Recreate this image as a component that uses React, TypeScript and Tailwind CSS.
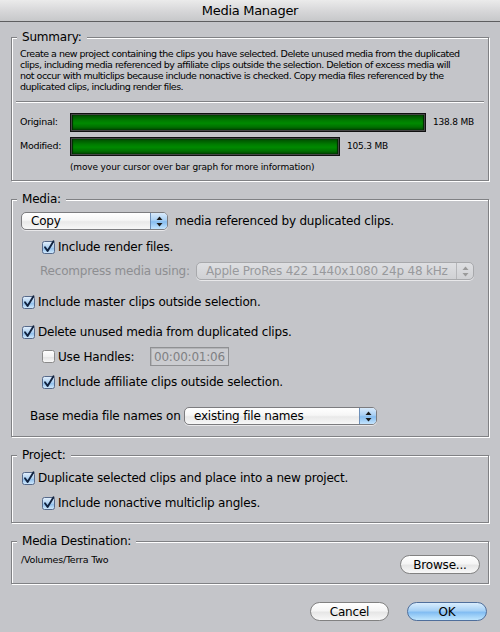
import { useId } from "react";

const bg = "bg-[#c4c5c9]";
const txt = "whitespace-nowrap text-[12px] leading-[16px] tracking-[-0.2px]";

function Check({ checked = true }: { checked?: boolean }) {
  const id = useId();
  return (
    <svg width="13" height="13" viewBox="0 0 13 13" className="shrink-0 overflow-visible">
      <defs>
        <linearGradient id={id} x1="0" y1="0" x2="0" y2="1">
          {checked ? (
            <>
              <stop offset="0" stopColor="#e6f1fc" />
              <stop offset="0.5" stopColor="#abcff1" />
              <stop offset="0.55" stopColor="#8fbfec" />
              <stop offset="1" stopColor="#d4ebfd" />
            </>
          ) : (
            <>
              <stop offset="0" stopColor="#ffffff" />
              <stop offset="0.5" stopColor="#f2f2f2" />
              <stop offset="0.55" stopColor="#e4e4e4" />
              <stop offset="1" stopColor="#fafafa" />
            </>
          )}
        </linearGradient>
      </defs>
      <rect x="0.5" y="0.5" width="12" height="12" rx="2" fill={`url(#${id})`} stroke={checked ? "#56698a" : "#8a8a8a"} />
      {checked && (
        <path d="M3 6.2 L5.6 10 L11.5 0.2" stroke="#10223f" strokeWidth="1.9" fill="none" strokeLinecap="round" strokeLinejoin="round" />
      )}
    </svg>
  );
}

function Arrows({ disabled = false }: { disabled?: boolean }) {
  const c = disabled ? "#9a9a9a" : "#1b1b1b";
  return (
    <svg width="7" height="11" viewBox="0 0 7 11">
      <path d="M3.5 0.5 L6.5 4 L0.5 4 Z" fill={c} />
      <path d="M3.5 10.5 L6.5 7 L0.5 7 Z" fill={c} />
    </svg>
  );
}

function Popup({ label, className, disabled = false }: { label: string; className: string; disabled?: boolean }) {
  return (
    <div
      className={
        "flex shrink-0 items-stretch overflow-hidden rounded-[5px] border shadow-[0_1px_0_#e8e8ea] " +
        (disabled
          ? "border-[#a8a9ac] bg-[linear-gradient(#dedfe2,#d0d1d4)] text-[#98999c] "
          : "border-[#7c7c7f] bg-[linear-gradient(#ffffff,#f6f6f6_45%,#e9e9e9_55%,#f7f7f7)] text-black ") +
        className
      }
    >
      <span className={"flex-1 self-center overflow-hidden pl-[9px] " + txt}>{label}</span>
      <span
        className={
          "flex w-[17px] items-center justify-center border-l " +
          (disabled
            ? "border-[#b5b6b9]"
            : "border-[#6d8fb8] bg-[linear-gradient(#d8eafb,#a9d0f4_45%,#86bdf0_55%,#c4e4fd)]")
        }
      >
        <Arrows disabled={disabled} />
      </span>
    </div>
  );
}

function Group({ title, className = "", children }: { title: string; className?: string; children: React.ReactNode }) {
  return (
    <div className={"relative border border-[#808184] shadow-[1px_1px_0_#ffffff,inset_1px_1px_0_#ffffff] " + className}>
      <span className={"absolute -top-[9px] left-[5px] px-[5px] text-[12.5px] " + txt + " " + bg}>{title}</span>
      {children}
    </div>
  );
}

function Bar({ width }: { width: string }) {
  return (
    <div className={"h-[19px] shrink-0 border border-[#101010] bg-[#454545] p-[1px] " + width}>
      <div className="h-full bg-[linear-gradient(#004c00,#007a00_35%,#008a00_55%,#007000_80%,#004400)] shadow-[inset_1px_0_1px_#002c00,inset_-1px_0_1px_#002c00]" />
    </div>
  );
}

function CheckRow({ label, indent = false, checked = true, className = "" }: { label: string; indent?: boolean; checked?: boolean; className?: string }) {
  return (
    <div className={"flex h-[16px] items-center gap-[3px] " + (indent ? "pl-[30px] " : "pl-[10px] ") + className}>
      <Check checked={checked} />
      <span className={txt}>{label}</span>
    </div>
  );
}

function Button({ label, primary = false, className = "" }: { label: string; primary?: boolean; className?: string }) {
  return (
    <div
      className={
        "flex h-[19px] items-center justify-center rounded-full border " +
        txt +
        " " +
        (primary
          ? "border-[#4f6f9c] bg-[linear-gradient(#d9edfd,#a6d1f6_45%,#82bdf2_55%,#bfe6fe)] "
          : "border-[#818181] bg-[linear-gradient(#ffffff,#f5f5f5_45%,#e6e6e6_55%,#f8f8f8)] ") +
        className
      }
    >
      {label}
    </div>
  );
}

export default function App() {
  return (
    <div className={"h-[632px] w-[500px] overflow-hidden text-black font-['DejaVu_Sans',sans-serif] " + bg}>
      <div className="flex h-[22px] items-center justify-center border-b border-[#5e5e60] bg-[linear-gradient(#ebebeb,#d4d4d6_60%,#c7c8ca)] text-[13px] tracking-[-0.3px]">
        Media Manager
      </div>

      <div className="flex flex-col gap-[18px] px-[11px] pt-[15px]">
        <Group title="Summary:" className="h-[144px]">
          <p className="whitespace-nowrap px-[8px] pt-[10px] text-[9.5px] leading-[11px] tracking-[-0.5px]">
            Create a new project containing the clips you have selected. Delete unused media from the duplicated
            <br />
            clips, including media referenced by affiliate clips outside the selection. Deletion of excess media will
            <br />
            not occur with multiclips because include nonactive is checked. Copy media files referenced by the
            <br />
            duplicated clips, including render files.
          </p>
          <div className="mx-[4px] mt-[9px] h-[2px] border-t border-[#808184] bg-white" />
          <div className="mt-[10px] flex flex-col gap-[5px] pl-[8px]">
            <div className="flex items-center">
              <span className="w-[50px] whitespace-nowrap text-[9.5px] tracking-[-0.3px]">Original:</span>
              <Bar width="w-[356px]" />
              <span className="whitespace-nowrap pl-[7px] text-[9px] tracking-[-0.2px]">138.8 MB</span>
            </div>
            <div className="flex items-center">
              <span className="w-[50px] whitespace-nowrap text-[9.5px] tracking-[-0.3px]">Modified:</span>
              <Bar width="w-[270px]" />
              <span className="whitespace-nowrap pl-[7px] text-[9px] tracking-[-0.2px]">105.3 MB</span>
            </div>
          </div>
          <p className="mt-[5px] whitespace-nowrap pl-[58px] text-[9px] leading-[12px] tracking-[-0.15px]">
            (move your cursor over bar graph for more information)
          </p>
        </Group>

        <Group title="Media:" className="h-[238px]">
          <div className="mt-[12px] flex h-[18px] items-center gap-[7px] pl-[9px]">
            <Popup label="Copy" className="h-[18px] w-[147px]" />
            <span className={txt}>media referenced by duplicated clips.</span>
          </div>
          <CheckRow label="Include render files." indent className="mt-[9px]" />
          <div className="mt-[7px] flex h-[18px] items-center pl-[28px]">
            <span className={"w-[156px] text-[#8d8e91] " + txt}>Recompress media using:</span>
            <Popup label="Apple ProRes 422 1440x1080 24p 48 kHz" disabled className="h-[18px] w-[278px]" />
          </div>
          <CheckRow label="Include master clips outside selection." className="mt-[14px]" />
          <CheckRow label="Delete unused media from duplicated clips." className="mt-[14px]" />
          <div className="mt-[7px] flex h-[19px] items-center pl-[30px]">
            <Check checked={false} />
            <span className={"w-[95px] pl-[3px] " + txt}>Use Handles:</span>
            <span className={"flex h-[19px] w-[79px] items-center justify-center border border-[#8f9093] bg-[#cbccd0] text-[#7f8083] shadow-[inset_1px_1px_0_#b3b4b7] " + txt}>
              00:00:01:06
            </span>
          </div>
          <CheckRow label="Include affiliate clips outside selection." indent className="mt-[8px]" />
          <div className="mt-[17px] flex h-[18px] items-center pl-[18px]">
            <span className={"w-[154px] " + txt}>Base media file names on</span>
            <Popup label="existing file names" className="h-[18px] w-[193px]" />
          </div>
        </Group>

        <Group title="Project:" className="h-[68px]">
          <CheckRow label="Duplicate selected clips and place into a new project." className="mt-[14px]" />
          <CheckRow label="Include nonactive multiclip angles." indent className="mt-[9px]" />
        </Group>

        <Group title="Media Destination:" className="h-[43px]">
          <div className="flex items-start justify-between pl-[9px] pr-[8px] pt-[12px]">
            <span className="whitespace-nowrap text-[9.5px] leading-[12px] tracking-[-0.2px]">/Volumes/Terra Two</span>
            <Button label="Browse..." className="mt-[1px] w-[80px]" />
          </div>
        </Group>
      </div>

      <div className="flex justify-end gap-[18px] pr-[13px] pt-[18px]">
        <Button label="Cancel" className="w-[79px]" />
        <Button label="OK" primary className="w-[80px]" />
      </div>
    </div>
  );
}
